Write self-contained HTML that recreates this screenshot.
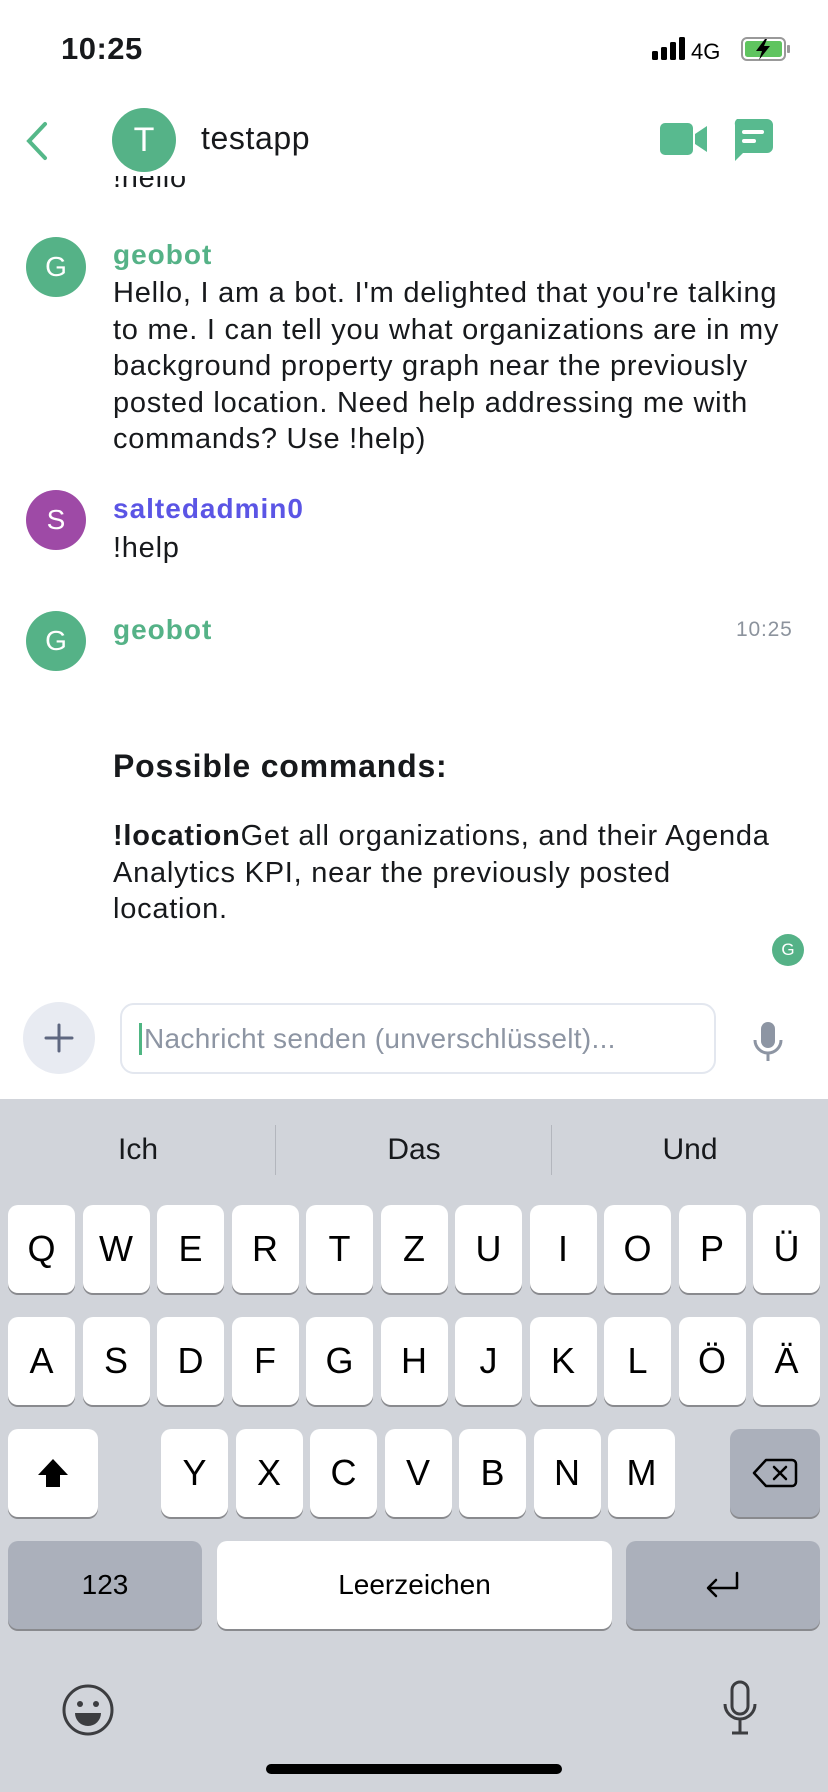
<!DOCTYPE html>
<html><head><meta charset="utf-8"><style>
*{margin:0;padding:0;box-sizing:border-box}
body{width:828px;height:1792px;background:#fff;font-family:"Liberation Sans",sans-serif;position:relative;overflow:hidden;color:#17191c}
.a{position:absolute}
.av{position:absolute;border-radius:50%;color:#fff;display:flex;align-items:center;justify-content:center;font-weight:400}
.name{position:absolute;font-weight:bold;font-size:28px;left:113px;letter-spacing:1px}
.txt{position:absolute;left:113px;font-size:29px;line-height:36.5px;white-space:nowrap;letter-spacing:0.75px}
.kb{position:absolute;left:0;top:1099px;width:828px;height:693px;background:#d1d4da}
.k{position:absolute;height:88px;background:#fff;border-radius:10px;box-shadow:0 2px 0 #898a8e;display:flex;align-items:center;justify-content:center;font-size:36px;color:#000}
.s{background:#abb0bb}
</style></head><body>
<div class="a" style="left:61px;top:31px;font-size:31px;font-weight:bold;letter-spacing:0.5px">10:25</div>
<svg class="a" style="left:652px;top:37px" width="140" height="26">
<rect x="0" y="14" width="6" height="9" rx="1.5" fill="#000"/><rect x="9" y="10" width="6" height="13" rx="1.5" fill="#000"/><rect x="18" y="5" width="6" height="18" rx="1.5" fill="#000"/><rect x="27" y="0" width="6" height="23" rx="1.5" fill="#000"/>
<text x="39" y="22" font-family="Liberation Sans" font-size="22" fill="#000">4G</text>
<rect x="90" y="1" width="43" height="22" rx="5" fill="none" stroke="#999" stroke-width="2"/><rect x="93" y="4" width="37" height="16" rx="2.5" fill="#5fc45f"/><rect x="135" y="8" width="3" height="8" rx="1" fill="#999"/>
<path d="M113 2 L104 14 L110 14 L107 23 L118 9 L112 9 L115 2Z" fill="#000"/>
</svg>
<div class="a" style="left:113px;top:176px;height:20px;overflow:hidden;font-size:29px;letter-spacing:0.75px"><div style="margin-top:-14px">!hello</div></div>
<div class="a" style="left:0;top:80px;width:828px;height:96px;background:#fff"></div>
<svg class="a" style="left:24px;top:121px" width="26" height="40"><path d="M21 3 L5 20 L21 37" stroke="#55b889" stroke-width="4" fill="none" stroke-linecap="round"/></svg>
<div class="av" style="left:112px;top:108px;width:64px;height:64px;background:#55b287;font-size:34px">T</div>
<div class="a" style="left:201px;top:120px;font-size:32px;letter-spacing:0.6px">testapp</div>
<svg class="a" style="left:660px;top:123px" width="50" height="34"><rect x="0" y="0" width="33" height="32" rx="5" fill="#58ba8f"/><path d="M35 11 L47 3 L47 29 L35 21Z" fill="#58ba8f"/></svg>
<svg class="a" style="left:731px;top:119px" width="44" height="44"><path d="M6 0 H36 a6 6 0 0 1 6 6 V28 a6 6 0 0 1 -6 6 H12 L4 42 V6 a6 6 0 0 1 2 -6Z" fill="#58ba8f"/><rect x="11" y="11" width="22" height="4" rx="2" fill="#fff"/><rect x="11" y="20" width="14" height="4" rx="2" fill="#fff"/></svg>

<div class="av" style="left:26px;top:237px;width:60px;height:60px;background:#55b287;font-size:28px">G</div>
<div class="name" style="top:239px;color:#55b287">geobot</div>
<div class="txt" style="top:275px">Hello, I am a bot. I'm delighted that you're talking<br>to me. I can tell you what organizations are in my<br>background property graph near the previously<br>posted location. Need help addressing me with<br>commands? Use !help)</div>

<div class="av" style="left:26px;top:490px;width:60px;height:60px;background:#9e4aa6;font-size:28px">S</div>
<div class="name" style="top:493px;color:#5b55e5">saltedadmin0</div>
<div class="txt" style="top:530px">!help</div>

<div class="av" style="left:26px;top:611px;width:60px;height:60px;background:#55b287;font-size:28px">G</div>
<div class="name" style="top:614px;color:#55b287">geobot</div>
<div class="a" style="left:736px;top:618px;font-size:21px;color:#8c939d;letter-spacing:0.8px">10:25</div>
<div class="a" style="left:113px;top:748px;font-size:32px;font-weight:bold;letter-spacing:0.8px">Possible commands:</div>
<div class="txt" style="top:818px"><b>!location</b>Get all organizations, and their Agenda<br>Analytics KPI, near the previously posted<br>location.</div>
<div class="av" style="left:772px;top:934px;width:32px;height:32px;background:#55b287;font-size:17px">G</div>

<div class="a" style="left:23px;top:1002px;width:72px;height:72px;border-radius:50%;background:#e8ebf2"></div>
<svg class="a" style="left:43px;top:1022px" width="32" height="32"><path d="M16 3V29M3 16H29" stroke="#5e6780" stroke-width="3" stroke-linecap="round"/></svg>
<div class="a" style="left:120px;top:1003px;width:596px;height:71px;border:2px solid #e3e7ef;border-radius:14px"></div>
<div class="a" style="left:139px;top:1023px;width:3px;height:32px;background:#4fb683"></div>
<div class="a" style="left:144px;top:1023px;font-size:28px;color:#8d95a3;letter-spacing:0.3px">Nachricht senden (unverschlüsselt)...</div>
<svg class="a" style="left:752px;top:1020px" width="32" height="42"><rect x="9" y="2" width="14" height="26" rx="7" fill="#8d95a3"/><path d="M3 20 a13 13 0 0 0 26 0" stroke="#8d95a3" stroke-width="3" fill="none"/><path d="M16 33V41" stroke="#8d95a3" stroke-width="3"/></svg>

<div class="kb">
<div class="a" style="left:0;top:34px;width:276px;text-align:center;font-size:30px">Ich</div>
<div class="a" style="left:275px;top:26px;width:1px;height:50px;background:#b3b6bd"></div>
<div class="a" style="left:276px;top:34px;width:276px;text-align:center;font-size:30px">Das</div>
<div class="a" style="left:551px;top:26px;width:1px;height:50px;background:#b3b6bd"></div>
<div class="a" style="left:552px;top:34px;width:276px;text-align:center;font-size:30px">Und</div>
</div>
<div id="keys"></div>
<script>
var h='',r1="QWERTZUIOPÜ",r2="ASDFGHJKLÖÄ",r3="YXCVBNM";
for(var i=0;i<11;i++)h+='<div class="k" style="left:'+(8+i*74.5)+'px;top:1205px;width:67px">'+r1[i]+'</div>';
for(var i=0;i<11;i++)h+='<div class="k" style="left:'+(8+i*74.5)+'px;top:1317px;width:67px">'+r2[i]+'</div>';
for(var i=0;i<7;i++)h+='<div class="k" style="left:'+(161+i*74.5)+'px;top:1429px;width:67px">'+r3[i]+'</div>';
document.getElementById('keys').innerHTML=h;
</script>
<div class="k" style="left:8px;top:1429px;width:90px"><svg width="36" height="34"><path d="M18 3 L33 19 H25 V31 H11 V19 H3Z" fill="#000"/></svg></div>
<div class="k s" style="left:730px;top:1429px;width:90px"><svg width="46" height="32"><path d="M14 3 H40 a4 4 0 0 1 4 4 V25 a4 4 0 0 1 -4 4 H14 L2 16Z" fill="none" stroke="#000" stroke-width="2.5" stroke-linejoin="round"/><path d="M22 10 L34 22 M34 10 L22 22" stroke="#000" stroke-width="2.5" stroke-linecap="round"/></svg></div>
<div class="k s" style="left:8px;top:1541px;width:194px;font-size:28px">123</div>
<div class="k" style="left:217px;top:1541px;width:395px;font-size:28px">Leerzeichen</div>
<div class="k s" style="left:626px;top:1541px;width:194px"><svg width="40" height="30"><path d="M34 3 V18 H6 M13 10 L5 18 L13 26" fill="none" stroke="#000" stroke-width="2.5" stroke-linecap="round" stroke-linejoin="round"/></svg></div>
<svg class="a" style="left:61px;top:1683px" width="54" height="54"><circle cx="27" cy="27" r="24" fill="none" stroke="#3c3d40" stroke-width="3"/><circle cx="19" cy="21" r="3" fill="#3c3d40"/><circle cx="35" cy="21" r="3" fill="#3c3d40"/><path d="M14 30 H40 a13 13 0 0 1 -26 0Z" fill="#3c3d40"/></svg>
<svg class="a" style="left:722px;top:1680px" width="36" height="58"><rect x="10" y="2" width="16" height="32" rx="8" fill="none" stroke="#3c3d40" stroke-width="3"/><path d="M3 24 a15 15 0 0 0 30 0" fill="none" stroke="#3c3d40" stroke-width="3"/><path d="M18 40V52 M10 53H26" stroke="#3c3d40" stroke-width="3"/></svg>
<div class="a" style="left:266px;top:1764px;width:296px;height:10px;border-radius:5px;background:#000"></div>
</body></html>
